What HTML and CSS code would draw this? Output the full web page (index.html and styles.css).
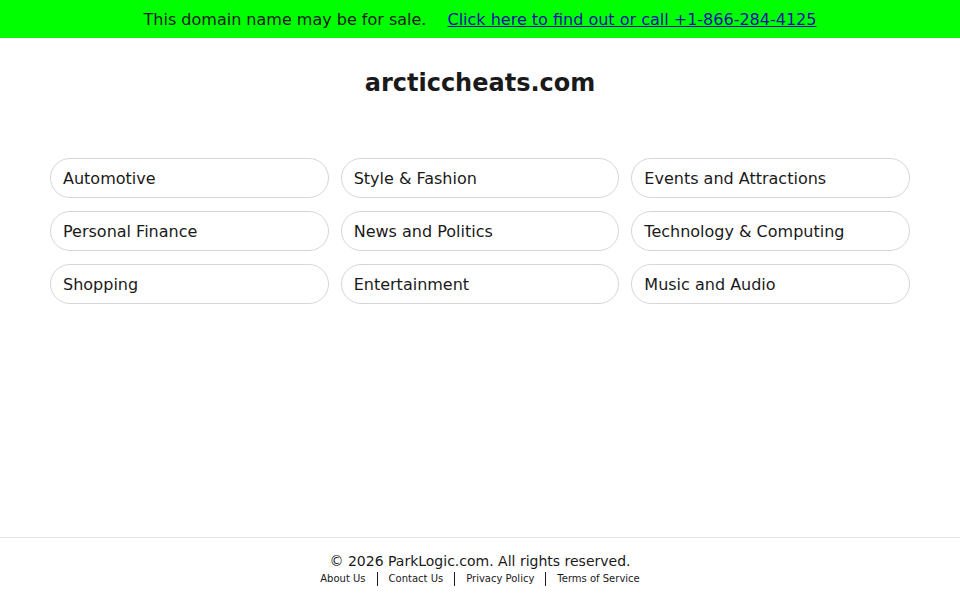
FILE: index.html
```html
<!DOCTYPE html>
<html lang="en">
<head>
<meta charset="utf-8">
<title>arcticcheats.com</title>
<link rel="stylesheet" href="styles.css">
</head>
<body>
<div class="page">
  <div class="sale-bar">
    <span class="sale-text">This domain name may be for sale.</span>
    <a class="sale-link" href="#">Click here to find out or call +1-866-284-4125</a>
  </div>
  <main class="main">
    <h1 class="domain">arcticcheats.com</h1>
    <div class="grid">
      <a class="pill" href="#">Automotive</a>
      <a class="pill" href="#">Style &amp; Fashion</a>
      <a class="pill" href="#">Events and Attractions</a>
      <a class="pill" href="#">Personal Finance</a>
      <a class="pill" href="#">News and Politics</a>
      <a class="pill" href="#">Technology &amp; Computing</a>
      <a class="pill" href="#">Shopping</a>
      <a class="pill" href="#">Entertainment</a>
      <a class="pill" href="#">Music and Audio</a>
    </div>
  </main>
  <footer class="footer">
    <div class="copy">© 2026 ParkLogic.com. All rights reserved.</div>
    <div class="links">
      <a href="#">About Us</a><span class="sep"></span><a href="#">Contact Us</a><span class="sep"></span><a href="#">Privacy Policy</a><span class="sep"></span><a href="#">Terms of Service</a>
    </div>
  </footer>
</div>
</body>
</html>
```

FILE: styles.css
```css
html, body {
  margin: 0;
  padding: 0;
  background: #ffffff;
}
body {
  font-family: "DejaVu Sans", sans-serif;
  color: #1a1a1a;
}
.page {
  min-height: 100vh;
  display: flex;
  flex-direction: column;
}
.sale-bar {
  background: #00ff00;
  height: 38px;
  display: flex;
  align-items: center;
  justify-content: center;
  gap: 21px;
  font-size: 16px;
  color: #1a1a1a;
}
.sale-link {
  color: #1a0dab;
  text-decoration: underline;
}
.main {
  flex: 1;
  padding: 0 50px;
}
.domain {
  margin: 29px 0 0;
  text-align: center;
  font-size: 24px;
  line-height: 32px;
  font-weight: bold;
  color: #1a1a1a;
}
.grid {
  margin-top: 59px;
  display: grid;
  grid-template-columns: repeat(3, 1fr);
  gap: 13px 12px;
}
.pill {
  display: flex;
  align-items: center;
  height: 40px;
  box-sizing: border-box;
  padding: 0 12px;
  border: 1px solid #d6d6d6;
  border-radius: 20px;
  font-size: 16px;
  color: #1a1a1a;
  text-decoration: none;
}
.footer {
  border-top: 1px solid #e6e6e6;
  height: 63px;
  box-sizing: border-box;
  padding-top: 14px;
  text-align: center;
}
.copy {
  font-size: 14px;
  line-height: 18px;
  color: #1a1a1a;
}
.links {
  margin-top: 2px;
  display: flex;
  justify-content: center;
  align-items: center;
  font-size: 10px;
  line-height: 14px;
}
.links a {
  color: #1a1a1a;
  text-decoration: none;
}
.sep {
  display: inline-block;
  width: 1px;
  height: 14px;
  background: #1a1a1a;
  margin: 0 11px;
}
```
